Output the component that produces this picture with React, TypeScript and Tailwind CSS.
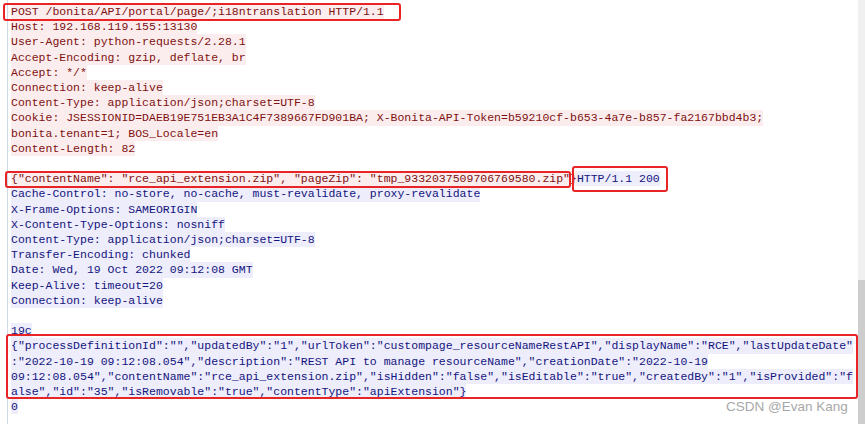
const request = [
  "POST /bonita/API/portal/page/;i18ntranslation HTTP/1.1",
  "Host: 192.168.119.155:13130",
  "User-Agent: python-requests/2.28.1",
  "Accept-Encoding: gzip, deflate, br",
  "Accept: */*",
  "Connection: keep-alive",
  "Content-Type: application/json;charset=UTF-8",
  "Cookie: JSESSIONID=DAEB19E751EB3A1C4F7389667FD901BA; X-Bonita-API-Token=b59210cf-b653-4a7e-b857-fa2167bbd4b3;",
  "bonita.tenant=1; BOS_Locale=en",
  "Content-Length: 82",
];

const response = [
  "Cache-Control: no-store, no-cache, must-revalidate, proxy-revalidate",
  "X-Frame-Options: SAMEORIGIN",
  "X-Content-Type-Options: nosniff",
  "Content-Type: application/json;charset=UTF-8",
  "Transfer-Encoding: chunked",
  "Date: Wed, 19 Oct 2022 09:12:08 GMT",
  "Keep-Alive: timeout=20",
  "Connection: keep-alive",
];

const body = [
  "19c",
  '{"processDefinitionId":"","updatedBy":"1","urlToken":"custompage_resourceNameRestAPI","displayName":"RCE","lastUpdateDate"',
  ':"2022-10-19 09:12:08.054","description":"REST API to manage resourceName","creationDate":"2022-10-19',
  '09:12:08.054","contentName":"rce_api_extension.zip","isHidden":"false","isEditable":"true","createdBy":"1","isProvided":"f',
  'alse","id":"35","isRemovable":"true","contentType":"apiExtension"}',
  "0",
];

function ReqLine({ text }: { text: string }) {
  return <div className="w-fit bg-[#fbeded] text-[#7f1010]">{text}</div>;
}

function ResLine({ text }: { text: string }) {
  return <div className="w-fit bg-[#ededfb] text-[#14147f]">{text}</div>;
}

export default function App() {
  return (
    <div className="relative w-[865px] h-[424px] overflow-hidden bg-white flex">
      <div className="flex-1 pl-[7px]">
        <div
          className="h-full border-l border-[#cfdae6] pl-[3px] pt-[4px] whitespace-pre text-[11.5px] leading-[15.2px]"
          style={{ fontFamily: '"Liberation Mono", "DejaVu Sans Mono", monospace' }}
        >
          {request.map((t, i) => (
            <ReqLine key={i} text={t} />
          ))}
          <div className="h-[15.2px]" />
          <div className="flex">
            <span className="bg-[#fbeded] text-[#7f1010]">
              {'{"contentName": "rce_api_extension.zip", "pageZip": "tmp_9332037509706769580.zip"}'}
            </span>
            <span className="bg-[#ededfb] text-[#14147f]">HTTP/1.1 200</span>
          </div>
          {response.map((t, i) => (
            <ResLine key={i} text={t} />
          ))}
          <div className="h-[15.2px]" />
          {body.map((t, i) => (
            <ResLine key={i} text={t} />
          ))}
        </div>
      </div>

      <div className="w-[7px] h-full flex flex-col bg-[#f0f0f0]">
        <div className="h-[280px]" />
        <div className="flex-1 bg-[#cdcdcd]" />
      </div>

      {/* annotation boxes */}
      <div className="absolute left-[3px] top-[3px] w-[398px] h-[18px] border-2 border-[#e82424] rounded-[3px]" />
      <div className="absolute left-[5px] top-[171px] w-[566px] h-[17px] border-2 border-[#e82424] rounded-[3px]" />
      <div className="absolute left-[572px] top-[166px] w-[96px] h-[26px] border-2 border-[#e82424] rounded-[3px]" />
      <div className="absolute left-[6px] top-[334px] w-[852px] h-[65px] border-2 border-[#e82424] rounded-[3px]" />

      <div
        className="absolute left-[726px] top-[398px] text-[13.5px] leading-[18px] text-[#a8a8a8]"
        style={{ fontFamily: '"Liberation Sans", Arial, sans-serif' }}
      >
        CSDN @Evan Kang
      </div>
    </div>
  );
}
